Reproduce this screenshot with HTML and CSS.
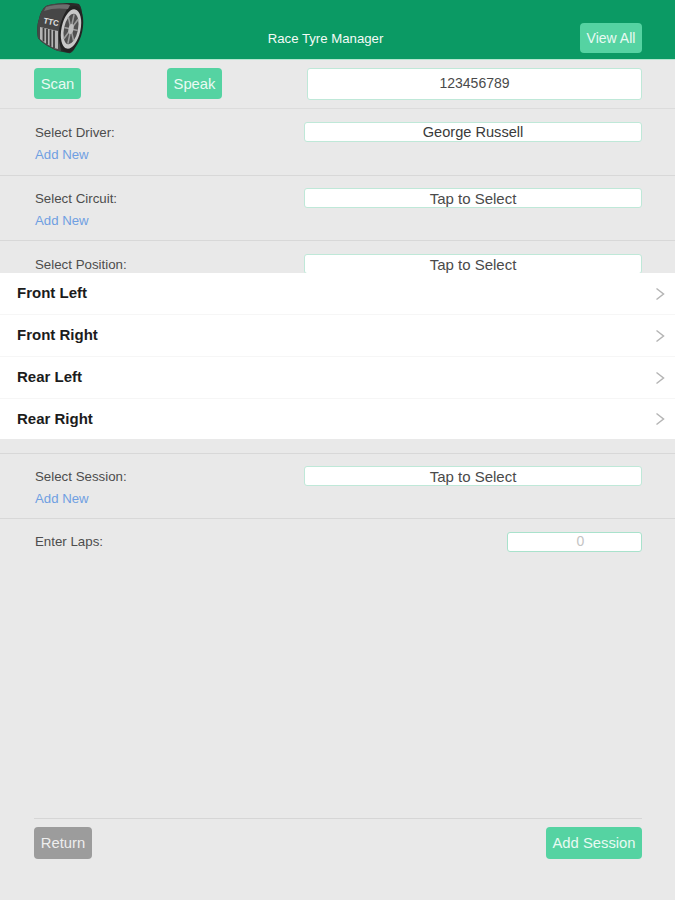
FILE: index.html
```html
<!DOCTYPE html>
<html lang="en">
<head>
<meta charset="utf-8">
<title>Race Tyre Manager</title>
<link rel="stylesheet" href="styles.css">
</head>
<body>
<div class="page">
  <header class="topbar">
    <svg class="logo" viewBox="0 0 50 56" width="50" height="56" aria-hidden="true">
      <path d="M12 4 C20 1 38 0 45 2 C50 8 49 22 44 38 C41 48 38 52 34 51 L24 49 C14 45 7 40 4 36 C3 30 3 22 5 17 C6 12 8 7 12 4Z" fill="#2a2a2a"/>
      <path d="M12 4 C20 1 30 1 36 3 C28 12 24 30 27 49 L24 49 C14 45 7 40 4 36 C3 30 3 22 5 17 C6 12 8 7 12 4Z" fill="#474747"/>
      <path d="M12 5 C18 3 28 2 36 3 L34 7 C26 6 18 6 10 9Z" fill="#6e6e6e"/>
      <text class="logo-mark" x="9" y="21" transform="rotate(12 9 21)">TTC</text>
      <path d="M6 25 L24 29 L24 47 L20 46 C14 43 9 40 6 37Z" fill="#b4b4b4"/>
      <path d="M9.5 26 V39.5 M13 27 V42.5 M16.5 27.5 V44.5 M20 28.5 V46" stroke="#3c3c3c" stroke-width="1.8"/>
      <g transform="rotate(12 37 27)">
        <ellipse cx="37" cy="27" rx="11.5" ry="23.5" fill="#232323"/>
        <ellipse cx="37" cy="27" rx="9.5" ry="20" fill="#c8c8c8"/>
        <ellipse cx="37" cy="27" rx="7" ry="15.5" fill="#505050"/>
        <path d="M37 12 V42 M30 27 H44 M32 16 L42 38 M42 16 L32 38" stroke="#9c9c9c" stroke-width="1.6"/>
        <ellipse cx="37" cy="27" rx="2.5" ry="5" fill="#bdbdbd"/>
      </g>
    </svg>
    <h1 class="title">Race Tyre Manager</h1>
    <a class="btn btn-nav">View All</a>
  </header>

  <section class="scan-row">
    <a class="btn btn-scan">Scan</a>
    <a class="btn btn-speak">Speak</a>
    <div class="field field-code">123456789</div>
  </section>

  <section class="group group-tall">
    <div class="group-main">
      <span class="label">Select Driver:</span>
      <div class="field field-select field-value">George Russell</div>
    </div>
    <a class="add-new">Add New</a>
  </section>

  <section class="group group-short">
    <div class="group-main">
      <span class="label">Select Circuit:</span>
      <div class="field field-select">Tap to Select</div>
    </div>
    <a class="add-new">Add New</a>
  </section>

  <section class="group group-position">
    <div class="group-main">
      <span class="label">Select Position:</span>
      <div class="field field-select">Tap to Select</div>
    </div>
    <ul class="picker">
      <li class="picker-item">Front Left<svg class="chevron" viewBox="0 0 10 14" width="10" height="14" aria-hidden="true"><path d="M1.5 1.5 L8.5 7 L1.5 12.5"/></svg></li>
      <li class="picker-item">Front Right<svg class="chevron" viewBox="0 0 10 14" width="10" height="14" aria-hidden="true"><path d="M1.5 1.5 L8.5 7 L1.5 12.5"/></svg></li>
      <li class="picker-item">Rear Left<svg class="chevron" viewBox="0 0 10 14" width="10" height="14" aria-hidden="true"><path d="M1.5 1.5 L8.5 7 L1.5 12.5"/></svg></li>
      <li class="picker-item">Rear Right<svg class="chevron" viewBox="0 0 10 14" width="10" height="14" aria-hidden="true"><path d="M1.5 1.5 L8.5 7 L1.5 12.5"/></svg></li>
    </ul>
  </section>

  <section class="group group-short">
    <div class="group-main">
      <span class="label">Select Session:</span>
      <div class="field field-select">Tap to Select</div>
    </div>
    <a class="add-new">Add New</a>
  </section>

  <section class="laps-row">
    <span class="label">Enter Laps:</span>
    <div class="field field-laps">0</div>
  </section>

  <footer class="actions">
    <a class="btn btn-return">Return</a>
    <a class="btn btn-add">Add Session</a>
  </footer>
</div>
</body>
</html>
```

FILE: styles.css
```css
* { box-sizing: border-box; }

html, body {
  margin: 0;
  padding: 0;
}

body {
  background: #e9e9e9;
  font-family: "Liberation Sans", Arial, sans-serif;
  color: #444;
}

.page {
  display: flex;
  flex-direction: column;
  height: 900px;
  overflow: hidden;
}

.topbar {
  flex: none;
  height: 60px;
  display: flex;
  align-items: flex-start;
  padding: 0 33px 0 34px;
  background: #0b9a64;
  border-bottom: 1px solid #b4e6cf;
  position: relative;
}

.logo {
  flex: none;
  margin-top: 2px;
}

.logo-mark {
  font-family: "Liberation Sans", Arial, sans-serif;
  font-size: 8px;
  font-weight: 700;
  fill: #e4e4e4;
}

.title {
  position: absolute;
  left: 0;
  right: 24px;
  top: 31px;
  margin: 0;
  text-align: center;
  font-size: 13.2px;
  line-height: 15px;
  font-weight: 400;
  color: #f4fbf7;
  pointer-events: none;
}

.btn {
  display: flex;
  align-items: center;
  justify-content: center;
  flex: none;
  border-radius: 4px;
  background: #55d3a2;
  color: #e9faf3;
  font-size: 14.8px;
}

.btn-nav {
  margin-left: auto;
  margin-top: 23px;
  width: 62px;
  height: 30px;
  font-size: 14px;
}

.scan-row {
  flex: none;
  height: 49px;
  display: flex;
  align-items: flex-start;
  padding: 8px 33px 0 34px;
  border-bottom: 1px solid #dcdcdc;
}

.btn-scan {
  width: 47px;
  height: 31px;
}

.btn-speak {
  width: 55px;
  height: 31px;
  margin-left: 86px;
  margin-right: 85px;
}

.field {
  background: #fff;
  border: 1.5px solid #bfe8d8;
  border-radius: 3px;
  text-align: center;
  color: #4a4a4a;
}

.field-code {
  flex: 1;
  height: 32px;
  line-height: 29px;
  font-size: 14px;
}

.group {
  flex: none;
  padding: 13px 33px 0 34px;
  border-bottom: 1px solid #d8d8d8;
}

.group-tall { height: 67px; }
.group-short { height: 65px; padding-top: 12px; }

.group-position {
  height: 213px;
  position: relative;
}

.group-main {
  display: flex;
  align-items: flex-start;
  justify-content: space-between;
}

.label {
  margin-left: 1px;
  padding-top: 1px;
  font-size: 13.3px;
  line-height: 20px;
  color: #4d4d4d;
}

.field-select {
  width: 338px;
  height: 20px;
  line-height: 19px;
  font-size: 15px;
}

.field-value {
  font-size: 14.6px;
  color: #3a3a3a;
}

.add-new {
  display: block;
  margin: 2px 0 0 1px;
  font-size: 13.2px;
  line-height: 20px;
  color: #6f9fe2;
}

.picker {
  position: absolute;
  top: 32px;
  left: 0;
  right: 0;
  margin: 0;
  padding: 0;
  list-style: none;
  background: #fff;
}

.picker-item {
  display: flex;
  align-items: center;
  justify-content: space-between;
  height: 42px;
  padding: 0 10px 2px 17px;
  border-bottom: 1px solid #f6f6f6;
  font-size: 15px;
  font-weight: 700;
  color: #1c1c1c;
}

.picker-item:last-child {
  height: 40px;
  padding-bottom: 1px;
  border-bottom: 0;
}

.chevron {
  margin-top: 2px;
  fill: none;
  stroke: #b5b5b5;
  stroke-width: 1.5;
}

.picker-item:last-child .chevron {
  margin-top: 1px;
}

.laps-row {
  flex: none;
  display: flex;
  align-items: flex-start;
  justify-content: space-between;
  padding: 13px 33px 0 34px;
}

.laps-row .label {
  padding-top: 0;
}

.field-laps {
  width: 135px;
  height: 20px;
  padding-left: 12px;
  line-height: 17px;
  font-size: 14px;
  color: #c4c4c4;
  border-color: #a9e2cc;
}

.actions {
  flex: none;
  margin: auto 33px 41px 34px;
  padding-top: 8px;
  border-top: 1px solid #d6d6d6;
  display: flex;
  justify-content: space-between;
}

.btn-return {
  width: 58px;
  height: 32px;
  background: #9c9c9c;
  color: #eeeeee;
}

.btn-add {
  width: 96px;
  height: 32px;
}
```
